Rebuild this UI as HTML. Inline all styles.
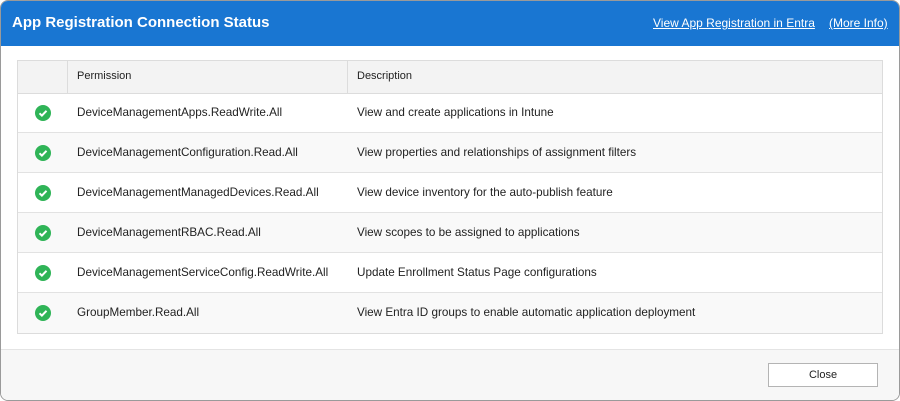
<!DOCTYPE html>
<html><head><style>
*{margin:0;padding:0;box-sizing:border-box}
body{width:900px;height:401px;background:#fff;font-family:"Segoe UI","Liberation Sans",sans-serif;overflow:hidden;position:relative}
.dlg{position:absolute;left:0;top:0;width:900px;height:401px;border:1px solid #9a9a9a;border-radius:8px;overflow:hidden;background:#fff}
.hd{position:absolute;left:-1px;top:-1px;width:900px;height:46px;background:#1976d2;color:#fff}
.hd .t{position:absolute;left:12px;top:14px;font-size:15px;font-weight:bold}
.hd a{position:absolute;top:16px;font-size:12px;color:#fff;text-decoration:underline}
.tbl{position:absolute;left:16px;top:59px;width:866px;height:274px;border:1px solid #dcdcdc}
.row{position:absolute;left:0;width:864px;height:40px;border-bottom:1px solid #e2e2e2;font-size:11.7px;color:#222}
.row span{position:absolute;top:13px}
.h{top:0;height:33px;background:#f3f3f3;border-bottom:1px solid #dcdcdc}
.h span{top:9px;font-size:11px}
.h .d1,.h .d2{position:absolute;top:0;width:1px;height:32px;background:#dcdcdc}
.ck{position:absolute;left:17px;top:12px;width:16px;height:16px;border-radius:50%;background:#2fb457}
.ft{position:absolute;left:0;top:348px;width:100%;height:52px;background:#f7f7f7;border-top:1px solid #e4e4e4}
.btn{position:absolute;left:767px;top:13px;width:110px;height:24px;border:1px solid #b4b4b4;background:#fff;font-size:11px;text-align:center;line-height:22px;color:#222}
</style></head><body>
<div class="dlg">
<div class="hd"><div class="t">App Registration Connection Status</div>
<a style="left:653px">View App Registration in Entra</a><a style="left:829px">(More Info)</a></div>
<div class="tbl">
<div class="row h"><div class="d1" style="left:49px"></div><div class="d2" style="left:329px"></div><span style="left:59px">Permission</span><span style="left:339px">Description</span></div>
<div class="row" style="top:32px"><div class="ck"><svg width="16" height="16"><path d="M4.5 8.3l2.4 2.3 4.6-4.8" stroke="#fff" stroke-width="2" fill="none"/></svg></div><span style="left:59px">DeviceManagementApps.ReadWrite.All</span><span style="left:339px">View and create applications in Intune</span></div>
<div class="row" style="top:72px;background:#f9f9f9"><div class="ck"><svg width="16" height="16"><path d="M4.5 8.3l2.4 2.3 4.6-4.8" stroke="#fff" stroke-width="2" fill="none"/></svg></div><span style="left:59px">DeviceManagementConfiguration.Read.All</span><span style="left:339px">View properties and relationships of assignment filters</span></div>
<div class="row" style="top:112px"><div class="ck"><svg width="16" height="16"><path d="M4.5 8.3l2.4 2.3 4.6-4.8" stroke="#fff" stroke-width="2" fill="none"/></svg></div><span style="left:59px">DeviceManagementManagedDevices.Read.All</span><span style="left:339px">View device inventory for the auto-publish feature</span></div>
<div class="row" style="top:152px;background:#f9f9f9"><div class="ck"><svg width="16" height="16"><path d="M4.5 8.3l2.4 2.3 4.6-4.8" stroke="#fff" stroke-width="2" fill="none"/></svg></div><span style="left:59px">DeviceManagementRBAC.Read.All</span><span style="left:339px">View scopes to be assigned to applications</span></div>
<div class="row" style="top:192px"><div class="ck"><svg width="16" height="16"><path d="M4.5 8.3l2.4 2.3 4.6-4.8" stroke="#fff" stroke-width="2" fill="none"/></svg></div><span style="left:59px">DeviceManagementServiceConfig.ReadWrite.All</span><span style="left:339px">Update Enrollment Status Page configurations</span></div>
<div class="row" style="top:232px;background:#f9f9f9;border-bottom:none;height:40px"><div class="ck"><svg width="16" height="16"><path d="M4.5 8.3l2.4 2.3 4.6-4.8" stroke="#fff" stroke-width="2" fill="none"/></svg></div><span style="left:59px">GroupMember.Read.All</span><span style="left:339px">View Entra ID groups to enable automatic application deployment</span></div>
</div>
<div class="ft"><div class="btn">Close</div></div>
</div>
</body></html>
